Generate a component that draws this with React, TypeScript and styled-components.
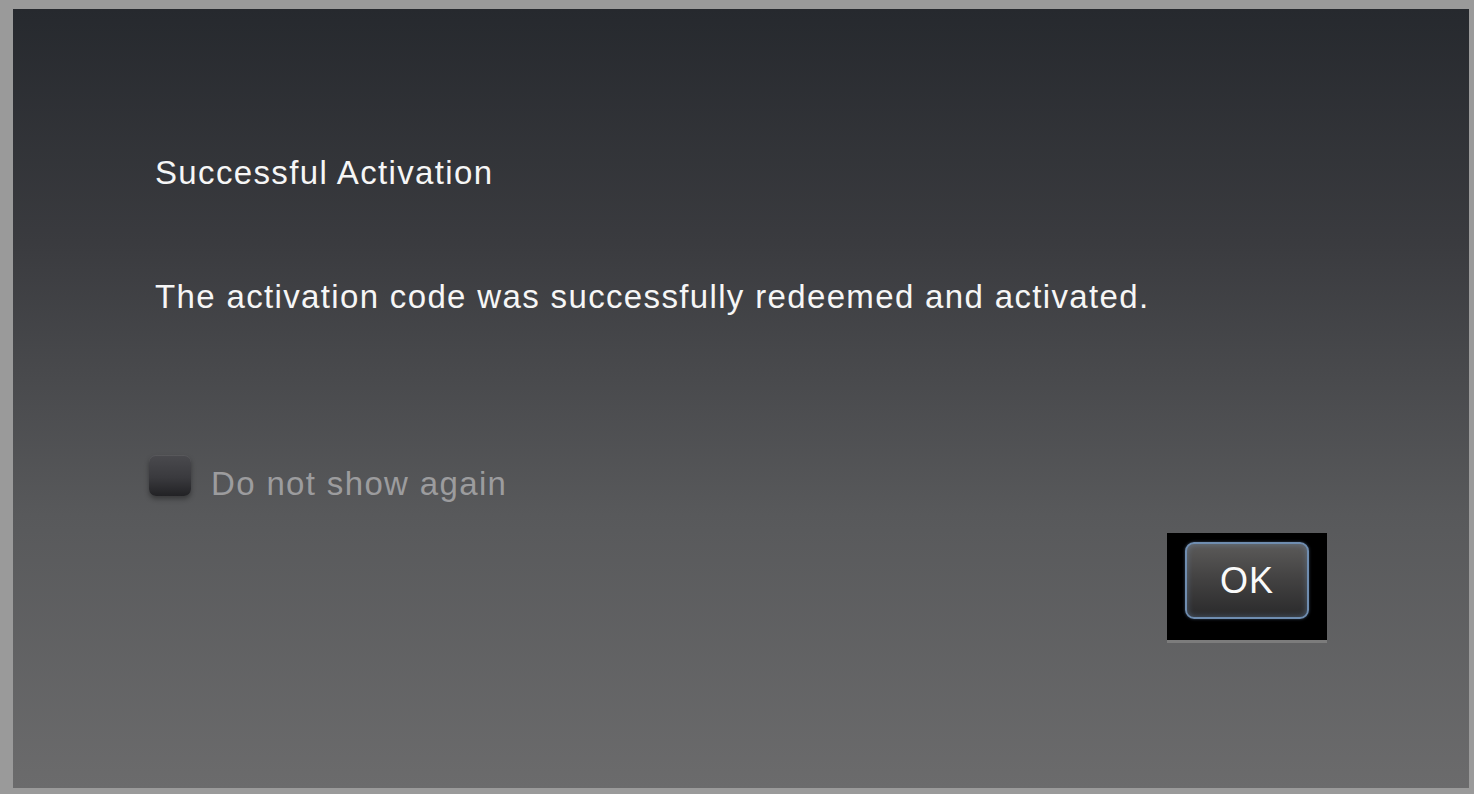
import styled, { createGlobalStyle } from "styled-components";

const GlobalStyle = createGlobalStyle`
  html, body {
    margin: 0;
    padding: 0;
    background: #9a9a9a;
  }
  #root {
    width: 1474px;
    height: 794px;
  }
`;

const Frame = styled.div`
  box-sizing: border-box;
  width: 1474px;
  height: 794px;
  padding: 9px 5px 6px 13px;
  background: #9a9a9a;
  display: flex;
`;

const Panel = styled.div`
  flex: 1;
  display: flex;
  flex-direction: column;
  padding: 0 142px 0 142px;
  background: linear-gradient(180deg, #26292e 0%, #3a3b3f 30%, #58595b 65%, #6b6b6c 100%);
  font-family: "Liberation Sans", Arial, Helvetica, sans-serif;
  color: #f6f6f6;
  font-size: 33px;
  line-height: 36px;
  letter-spacing: 1.35px;
`;

const Title = styled.div`
  margin-top: 146px;
`;

const Message = styled.div`
  margin-top: 88px;
`;

const CheckRow = styled.label`
  display: flex;
  align-items: flex-start;
  gap: 20px;
  margin-top: 140px;
  margin-left: -6px;
  color: #9c9c9e;
`;

const CheckBox = styled.span`
  box-sizing: border-box;
  width: 42px;
  height: 41px;
  border-radius: 7px;
  background: linear-gradient(180deg, #4a4a4e 0%, #3a3a3e 55%, #222225 100%);
  box-shadow: 0 3px 5px rgba(0, 0, 0, 0.35), inset 0 1px 0 rgba(255, 255, 255, 0.08);
`;

const CheckLabel = styled.span`
  margin-top: 11px;
`;

const ButtonRow = styled.div`
  display: flex;
  justify-content: flex-end;
  margin-top: 31px;
`;

const ButtonWell = styled.div`
  box-sizing: border-box;
  width: 160px;
  height: 110px;
  padding: 9px 18px 21px 18px;
  background: #000;
  border-bottom: 3px solid #7c7c7c;
`;

const OkButton = styled.button`
  box-sizing: border-box;
  width: 124px;
  height: 77px;
  border-radius: 9px;
  border: 2px solid #6f8db0;
  background: linear-gradient(180deg, #5b5a59 0%, #444343 45%, #2a2a2b 100%);
  box-shadow: inset 0 0 6px rgba(120, 150, 190, 0.45), 0 0 3px rgba(110, 140, 180, 0.5);
  color: #fafafa;
  font-family: "Liberation Sans", Arial, Helvetica, sans-serif;
  font-size: 36px;
  letter-spacing: 1px;
  line-height: 1;
  padding: 0;
  cursor: pointer;
`;

export default function App() {
  return (
    <>
      <GlobalStyle />
      <Frame>
        <Panel>
          <Title>Successful Activation</Title>
          <Message>The activation code was successfully redeemed and activated.</Message>
          <CheckRow>
            <CheckBox />
            <CheckLabel>Do not show again</CheckLabel>
          </CheckRow>
          <ButtonRow>
            <ButtonWell>
              <OkButton>OK</OkButton>
            </ButtonWell>
          </ButtonRow>
        </Panel>
      </Frame>
    </>
  );
}
